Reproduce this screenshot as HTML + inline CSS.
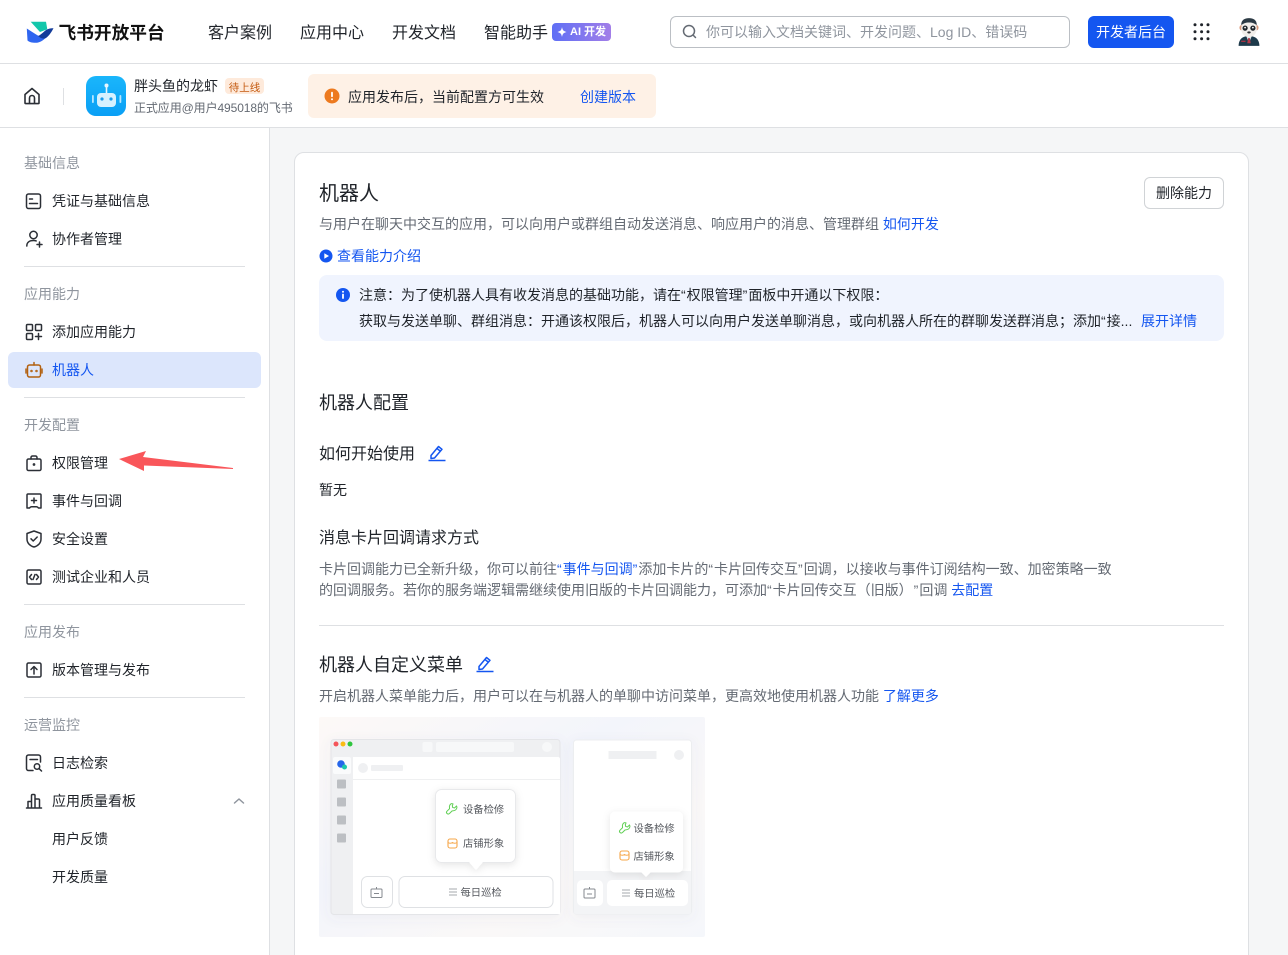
<!DOCTYPE html>
<html lang="zh"><head><meta charset="utf-8"><title>飞书开放平台</title>
<style>
html,body{margin:0;padding:0;width:1288px;height:955px;overflow:hidden;background:#f5f6f7;font-family:"Liberation Sans","Noto Sans CJK SC",sans-serif;color:#1f2329}
#r{position:relative;width:1288px;height:955px;overflow:hidden;background:#f5f6f7}
.a{position:absolute}
.t{position:absolute;white-space:nowrap;font-size:14px;line-height:22px;color:#1f2329;margin-top:1px}
.g{color:#646a73}.h{color:#8f959e}.b{color:#1456f0}
.q{letter-spacing:1px}
.n{font-size:16px;line-height:24px}
.l{position:absolute;background:#dee0e3;height:1px}
svg.i{position:absolute;fill:none;stroke:#2b2f36;stroke-width:1.5;stroke-linecap:round;stroke-linejoin:round}
</style></head><body><div id="r">

<div class="a" style="left:0;top:0;width:1288px;height:128px;background:#fff"></div>
<div class="l" style="left:0;top:63px;width:1288px"></div>
<div class="l" style="left:0;top:127px;width:1288px"></div>

<svg class="a" style="left:26px;top:20px" width="28" height="24" viewBox="0 0 28 24">
<path d="M4.700 1.700H20l1.300 7.600L14 12z" fill="#13c7ab"/>
<path d="M.8 8.500C5 11 9 14 13.500 16.500L20 17.500C17 20.500 14 22.800 9.500 22.800 6 22.800 3 22 1.500 20.500z" fill="#2f66f0"/>
<path d="M12 16C15 15 18 11 21 9.500 23 8.500 25 8 27.500 8.300 25.500 12 23.500 15.500 20 18 17 19.500 14.500 18 12 16z" fill="#133c9a"/>
</svg>
<div class="t" style="left:58.500px;top:20px;font-size:17.700px;line-height:24px;font-weight:700;color:#111">飞书开放平台</div>
<div class="t n" style="left:208px;top:21px">客户案例</div>
<div class="t n" style="left:300px;top:21px">应用中心</div>
<div class="t n" style="left:392px;top:21px">开发文档</div>
<div class="t n" style="left:484px;top:21px">智能助手</div>
<div class="a" style="left:552px;top:23px;width:59px;height:18px;border-radius:4px;background:linear-gradient(90deg,#5f6ff5,#a27ee8)"></div>
<svg class="a" style="left:556px;top:26px" width="12" height="12" viewBox="0 0 12 12"><path d="M6 1c.5 3 1.500 4.200 4.500 5C7.500 6.800 6.500 8 6 11 5.500 8 4.500 6.800 1.500 6 4.500 5.200 5.500 4 6 1z" fill="#fff"/></svg>
<div class="t" style="left:570px;top:22px;font-size:11px;line-height:18px;color:#fff;font-weight:700">AI 开发</div>

<div class="a" style="left:670px;top:16px;width:398px;height:30px;border:1px solid #bbbfc4;border-radius:6px;background:#fff"></div>
<svg class="i" style="left:681px;top:23px;stroke:#646a73" width="17" height="17" viewBox="0 0 17 17"><circle cx="8" cy="8" r="5.500"/><path d="M12 12l2.500 2.500"/></svg>
<div class="t h" style="left:706px;top:20px">你可以输入文档关键词、开发问题、Log ID、错误码</div>
<div class="a" style="left:1088px;top:16px;width:86px;height:32px;border-radius:6px;background:#1456f0"></div>
<div class="t" style="left:1088px;top:20px;width:86px;text-align:center;color:#fff">开发者后台</div>
<svg class="a" style="left:1193px;top:23px" width="18" height="18" viewBox="0 0 18 18" fill="#1f2329"><circle cx="2" cy="1.700" r="1.500"/><circle cx="8.600" cy="1.700" r="1.500"/><circle cx="15" cy="1.700" r="1.500"/><circle cx="2" cy="8.700" r="1.500"/><circle cx="8.600" cy="8.700" r="1.500"/><circle cx="15" cy="8.700" r="1.500"/><circle cx="2" cy="15.700" r="1.500"/><circle cx="8.600" cy="15.700" r="1.500"/><circle cx="15" cy="15.700" r="1.500"/></svg>
<svg class="a" style="left:1236px;top:17px" width="26" height="30" viewBox="0 0 30 34">
<path d="M3 33c0-6 3-10 8-11h8c5 1 8 5 8 11z" fill="#1d3a4a"/>
<path d="M12 22h6l-3 8z" fill="#dfe6ea"/><path d="M14 24h2l1 6h-4z" fill="#b33a48"/>
<rect x="6" y="27" width="5" height="1.500" fill="#a83344"/>
<ellipse cx="6" cy="12" rx="2" ry="3" fill="#d99a7c"/><ellipse cx="24" cy="12" rx="2" ry="3" fill="#d99a7c"/>
<ellipse cx="15" cy="13" rx="9" ry="10" fill="#f1eeea"/>
<path d="M6 9c0-6 4-8 9-8s9 2 9 8c-3-2-5-3-9-3s-6 1-9 3z" fill="#2c3a44"/>
<ellipse cx="10.500" cy="12.500" rx="3" ry="3" fill="#20262b"/><ellipse cx="19.500" cy="12.500" rx="3" ry="3" fill="#20262b"/>
<circle cx="10.500" cy="12" r="1" fill="#fff"/><circle cx="19.500" cy="12" r="1" fill="#fff"/>
<ellipse cx="15" cy="17.500" rx="2" ry="1.200" fill="#2b2f33"/>
</svg>

<svg class="i" style="left:23px;top:87px;stroke-width:1.600" width="18" height="18" viewBox="0 0 18 18"><path d="M2 7.500 9 1.500l7 6V16a.6.600 0 0 1-.6.600H2.600A.6.600 0 0 1 2 16zM6.500 16.500V11a2.500 2.500 0 0 1 5 0v5.500"/></svg>
<div class="a" style="left:63px;top:88px;width:1px;height:17px;background:#dee0e3"></div>
<svg class="a" style="left:86px;top:76px" width="40" height="40" viewBox="0 0 40 40">
<defs><linearGradient id="ag" x1="0" y1="0" x2="0" y2="1"><stop offset="0" stop-color="#1ab6fb"/><stop offset="1" stop-color="#0a9ff5"/></linearGradient></defs>
<rect width="40" height="40" rx="10" fill="url(#ag)"/>
<circle cx="20.500" cy="9.500" r="2" fill="#e6f7ff"/><rect x="19.700" y="10" width="1.600" height="7" fill="#e6f7ff"/>
<rect x="11" y="17" width="19" height="14" rx="4" fill="#d6f1ff"/>
<rect x="6" y="19" width="1.800" height="8" rx=".9" fill="#b6e6ff"/><rect x="33.500" y="19" width="1.800" height="8" rx=".9" fill="#b6e6ff"/>
<circle cx="16" cy="23" r="1.600" fill="#1a9cec"/><circle cx="25" cy="23" r="1.600" fill="#1a9cec"/>
</svg>
<div class="t" style="left:134px;top:74px">胖头鱼的龙虾</div>
<div class="a" style="left:225px;top:78px;width:39px;height:16px;border-radius:4px;background:#feeadb"></div>
<div class="t" style="left:225px;top:77px;width:39px;text-align:center;font-size:10.500px;line-height:20px;color:#c45a10">待上线</div>
<div class="t g" style="left:134px;top:96px;font-size:12px;letter-spacing:-.1px">正式应用@用户495018的飞书</div>
<div class="a" style="left:308px;top:74px;width:348px;height:44px;border-radius:6px;background:#fef1e6"></div>
<svg class="a" style="left:324px;top:88px" width="16" height="16" viewBox="0 0 16 16"><circle cx="8" cy="8" r="7.500" fill="#ed7a1f"/><rect x="7.100" y="3.800" width="1.800" height="5.400" rx=".9" fill="#fff"/><circle cx="8" cy="11.300" r="1" fill="#fff"/></svg>
<div class="t" style="left:348px;top:85px">应用发布后，当前配置方可生效</div>
<div class="t b" style="left:580px;top:85px">创建版本</div>

<div class="a" style="left:0;top:128px;width:269px;height:827px;background:#fff;border-right:1px solid #dee0e3"></div>
<div class="t h" style="left:24px;top:151px">基础信息</div>
<div class="t" style="left:52px;top:189px">凭证与基础信息</div>
<svg class="i" style="left:25px;top:193px" width="17" height="17" viewBox="0 0 17 17"><rect x="1.500" y="1" width="14" height="14.500" rx="2"/><path d="M4.500 6h3M4.500 10.500h8"/></svg>
<div class="t" style="left:52px;top:227px">协作者管理</div>
<svg class="i" style="left:25px;top:230px" width="18" height="18" viewBox="0 0 18 18"><circle cx="8.500" cy="5" r="3.700"/><path d="M1.800 16c0-3.500 2.500-5.500 6.700-5.500 1 0 2 .1 2.700.4M12 14.500h5M14.500 12v5"/></svg>
<div class="l" style="left:24px;top:266px;width:221px"></div>
<div class="t h" style="left:24px;top:282px">应用能力</div>
<div class="t" style="left:52px;top:320px">添加应用能力</div>
<svg class="i" style="left:25px;top:323px" width="18" height="18" viewBox="0 0 18 18"><rect x="1.500" y="1.500" width="6" height="6" rx="1"/><rect x="10.500" y="1.500" width="6" height="6" rx="1"/><rect x="1.500" y="10.500" width="6" height="6" rx="1"/><path d="M10.500 13.500h6M13.500 10.500v6"/></svg>
<div class="a" style="left:8px;top:352px;width:253px;height:36px;border-radius:6px;background:#dce6fc"></div>
<svg class="i" style="left:25px;top:361px;stroke:#b2600f" width="18" height="18" viewBox="0 0 18 18"><rect x="2.500" y="4" width="13" height="12" rx="2"/><path d="M9 1.500V4M1 8v4M17 8v4"/><circle cx="6.500" cy="10" r=".5"/><circle cx="11.500" cy="10" r=".5"/></svg>
<div class="t b" style="left:52px;top:358px">机器人</div>
<div class="l" style="left:24px;top:397px;width:221px"></div>
<div class="t h" style="left:24px;top:413px">开发配置</div>
<div class="t" style="left:52px;top:451px">权限管理</div>
<svg class="i" style="left:25px;top:454px" width="18" height="18" viewBox="0 0 18 18"><rect x="2" y="5" width="14" height="11.500" rx="1.500"/><path d="M6 5V3.500a1.500 1.500 0 0 1 1.500-1.500h3A1.500 1.500 0 0 1 12 3.500V5"/><circle cx="9" cy="10.500" r=".6"/></svg>
<div class="t" style="left:52px;top:489px">事件与回调</div>
<svg class="i" style="left:25px;top:492px" width="18" height="18" viewBox="0 0 18 18"><path d="M3 2h12a1 1 0 0 1 1 1v13h-2.500q-1-1.200-2-1.200h-5q-1 0-2 1.200H2V3a1 1 0 0 1 1-1zM9 6v5M6.500 8.500h5"/></svg>
<div class="t" style="left:52px;top:527px">安全设置</div>
<svg class="i" style="left:25px;top:530px" width="18" height="18" viewBox="0 0 18 18"><path d="M9 1 16 3.500V9c0 4-3 7-7 8-4-1-7-4-7-8V3.500zM6 8.800l2.200 2.200 4-4"/></svg>
<div class="t" style="left:52px;top:565px">测试企业和人员</div>
<svg class="i" style="left:25px;top:568px" width="18" height="18" viewBox="0 0 18 18"><rect x="2" y="2" width="14" height="14" rx="1.500"/><path d="M6.500 6.500 4.500 9l2 2.500M11.500 6.500l2 2.500-2 2.500M10 6.500 8 11.500"/></svg>
<div class="l" style="left:24px;top:604px;width:221px"></div>
<div class="t h" style="left:24px;top:620px">应用发布</div>
<div class="t" style="left:52px;top:658px">版本管理与发布</div>
<svg class="i" style="left:25px;top:661px" width="18" height="18" viewBox="0 0 18 18"><rect x="2" y="2" width="14" height="14" rx="1.500"/><path d="M9 13V6M6 8.500 9 5.500l3 3"/></svg>
<div class="l" style="left:24px;top:697px;width:221px"></div>
<div class="t h" style="left:24px;top:713px">运营监控</div>
<div class="t" style="left:52px;top:751px">日志检索</div>
<svg class="i" style="left:25px;top:754px" width="18" height="18" viewBox="0 0 18 18"><path d="M8 16.500H3.500a2 2 0 0 1-2-2V3a2 2 0 0 1 2-2h10a2 2 0 0 1 2 2v5M5 5.500h7.500"/><circle cx="12" cy="12.500" r="2.700"/><path d="M14 14.500l2.500 2.500"/></svg>
<div class="t" style="left:52px;top:789px">应用质量看板</div>
<svg class="i" style="left:25px;top:792px" width="18" height="18" viewBox="0 0 18 18"><path d="M1.500 16h15M3 16V9.500h3.500V16M6.500 16V3.500a1 1 0 0 1 1-1h1.500a1 1 0 0 1 1 1V16M10 16V7h3.500a1 1 0 0 1 1 1v8"/></svg>
<svg class="i" style="left:233px;top:796px;stroke:#8f959e" width="12" height="10" viewBox="0 0 12 10"><path d="M1.500 7 6 3l4.500 4"/></svg>
<div class="t" style="left:52px;top:827px">用户反馈</div>
<div class="t" style="left:52px;top:865px">开发质量</div>

<svg class="a" style="left:117px;top:449px" width="120" height="24" viewBox="0 0 120 24"><path d="M2 10 29 2l-3 6 90 11v1L27 16.500 27 22z" fill="#f9565a"/></svg>

<div class="a" style="left:294px;top:152px;width:953px;height:830px;background:#fff;border:1px solid #dee0e3;border-radius:10px"></div>
<div class="t" style="left:319px;top:179px;font-size:20px;line-height:28px">机器人</div>
<div class="a" style="left:1144px;top:177px;width:78px;height:30px;border:1px solid #d0d3d6;border-radius:6px;background:#fff"></div>
<div class="t" style="left:1144px;top:181px;width:80px;text-align:center">删除能力</div>
<div class="t g" style="left:319px;top:212px">与用户在聊天中交互的应用，可以向用户或群组自动发送消息、响应用户的消息、管理群组 <span class="b">如何开发</span></div>
<svg class="a" style="left:319px;top:249px" width="14" height="14" viewBox="0 0 14 14"><circle cx="7" cy="7" r="6.500" fill="#1456f0"/><path d="M5.300 4.200v5.600L10 7z" fill="#fff"/></svg>
<div class="t b" style="left:337px;top:244px">查看能力介绍</div>
<div class="a" style="left:319px;top:275px;width:905px;height:66px;border-radius:8px;background:#f0f4fe"></div>
<svg class="a" style="left:336px;top:288px" width="14" height="14" viewBox="0 0 14 14"><circle cx="7" cy="7" r="7" fill="#1456f0"/><circle cx="7" cy="3.800" r="1" fill="#fff"/><rect x="6.100" y="5.800" width="1.800" height="5" rx=".6" fill="#fff"/></svg>
<div class="t" style="left:359px;top:283px">注意：为了使机器人具有收发消息的基础功能，请在<span class="q">“</span>权限管理<span class="q">”</span>面板中开通以下权限：</div>
<div class="t" style="left:359px;top:309px">获取与发送单聊、群组消息：开通该权限后，机器人可以向用户发送单聊消息，或向机器人所在的群聊发送群消息；添加<span class="q">“</span>接...</div>
<div class="t b" style="left:1141px;top:309px">展开详情</div>

<div class="t" style="left:319px;top:389px;font-size:18px;line-height:26px">机器人配置</div>
<div class="t n" style="left:319px;top:442px">如何开始使用</div>
<svg class="a" style="left:428px;top:444px" width="18" height="18" viewBox="0 0 18 18" fill="none" stroke="#1456f0" stroke-width="1.500" stroke-linejoin="round"><path d="M3 11.500 10.500 2.500l3.500 2.800-7.500 8.700-3.500 .5zM9 4.500l3.500 2.800"/><path d="M.5 16.500h17"/></svg>
<div class="t" style="left:319px;top:478px">暂无</div>
<div class="t n" style="left:319px;top:526px">消息卡片回调请求方式</div>
<div class="t g" style="left:319px;top:557px">卡片回调能力已全新升级，你可以前往<span class="b"><span class="q">“</span>事件与回调<span class="q">”</span></span>添加卡片的<span class="q">“</span>卡片回传交互<span class="q">”</span>回调，以接收与事件订阅结构一致、加密策略一致</div>
<div class="t g" style="left:319px;top:578px">的回调服务。若你的服务端逻辑需继续使用旧版的卡片回调能力，可添加<span class="q">“</span>卡片回传交互（旧版）<span class="q" style="margin-left:8px">”</span>回调 <span class="b">去配置</span></div>
<div class="l" style="left:319px;top:625px;width:905px"></div>
<div class="t" style="left:319px;top:651px;font-size:18px;line-height:26px">机器人自定义菜单</div>
<svg class="a" style="left:476px;top:655px" width="18" height="18" viewBox="0 0 18 18" fill="none" stroke="#1456f0" stroke-width="1.500" stroke-linejoin="round"><path d="M3 11.500 10.500 2.500l3.500 2.800-7.500 8.700-3.500 .5zM9 4.500l3.500 2.800"/><path d="M.5 16.500h17"/></svg>
<div class="t g" style="left:319px;top:684px">开启机器人菜单能力后，用户可以在与机器人的单聊中访问菜单，更高效地使用机器人功能 <span class="b">了解更多</span></div>

<svg class="a" style="left:319px;top:717px;filter:blur(.35px)" width="386" height="220" viewBox="0 0 386 220" font-family="'Liberation Sans','Noto Sans CJK SC',sans-serif">
<defs>
<linearGradient id="bg1" x1="0" y1="0" x2="1" y2="1"><stop offset="0" stop-color="#fdf9f7"/><stop offset=".4" stop-color="#f3f5fb"/><stop offset=".7" stop-color="#faf8f8"/><stop offset="1" stop-color="#f5f7fb"/></linearGradient>
<filter id="s" x="-30%" y="-30%" width="160%" height="160%"><feDropShadow dx="0" dy="2" stdDeviation="4" flood-color="#000" flood-opacity=".1"/></filter>
<filter id="w" x="-10%" y="-10%" width="120%" height="120%"><feDropShadow dx="0" dy="3" stdDeviation="6" flood-color="#667" flood-opacity=".06"/></filter>
</defs>
<rect width="386" height="220" rx="2" fill="url(#bg1)"/>
<g filter="url(#w)"><rect x="12" y="22.500" width="229" height="175" rx="3" fill="#eff0f2" stroke="#e4e5e8"/></g>
<circle cx="17" cy="27" r="2.500" fill="#f4555a"/><circle cx="24" cy="27" r="2.500" fill="#fabc14"/><circle cx="31" cy="27" r="2.500" fill="#2fc53e"/>
<rect x="103.500" y="25" width="10" height="10" rx="2" fill="#f7f8f9"/><rect x="117" y="25" width="78" height="10" rx="2" fill="#f7f8f9"/><circle cx="228" cy="30" r="5" fill="#f7f8f9"/>
<rect x="14" y="40" width="18" height="17" rx="2" fill="#fafbfc"/><circle cx="22" cy="47" r="3.800" fill="#2566ea"/><circle cx="25.500" cy="50" r="2.500" fill="#1cc8ab"/>
<rect x="18" y="62.500" width="9" height="9" rx="1" fill="#bcbfc3"/><rect x="18" y="80.500" width="9" height="9" rx="1" fill="#bcbfc3"/><rect x="18" y="98.500" width="9" height="9" rx="1" fill="#bcbfc3"/><rect x="18" y="116.500" width="9" height="9" rx="1" fill="#bcbfc3"/>
<path d="M34 40h205a2 2 0 0 1 2 2v155H34z" fill="#fff"/>
<rect x="34" y="62" width="207" height="1" fill="#eff0f1"/>
<circle cx="44" cy="51" r="5" fill="#eff0f2"/><rect x="52" y="48" width="32" height="6" rx="1" fill="#eff0f2"/>
<g filter="url(#s)"><rect x="116.500" y="72.500" width="80" height="73" rx="6" fill="#fff" stroke="#e8e9eb"/><path d="M150 145h14l-7 8z" fill="#fff"/></g>
<path d="M134 87c-2-1-3 .5-3.500 2-.3 1 .2 2 0 2.700l-2.500 2.500c-1 1-.5 1.800 0 2.300s1.300 1 2.500 0l2.500-2.500c1.500-.2 3-.2 4-1.500s1-2.800.5-3.500l-2 2-1.800-.5-.4-1.800z" fill="none" stroke="#61cf55" stroke-width="1"/>
<text x="144" y="96" font-size="10.300" fill="#55585e">设备检修</text>
<rect x="129" y="122" width="9" height="9" rx="2" fill="none" stroke="#f6a74a" stroke-width="1.100"/><path d="M129 125.500q2.200 1.500 4.500 0 2.300 1.500 4.500 0" fill="none" stroke="#f6a74a" stroke-width="1"/>
<text x="144" y="130" font-size="10.300" fill="#55585e">店铺形象</text>
<rect x="42.500" y="159.500" width="31" height="31" rx="6" fill="#fff" stroke="#dfe1e4"/>
<rect x="52" y="172" width="11" height="8.500" rx="1" fill="none" stroke="#85898f" stroke-width="1"/><path d="M57.500 170v2M55 176.500h5" stroke="#85898f" stroke-width="1"/>
<rect x="80" y="159.500" width="154" height="31" rx="6" fill="#fff" stroke="#dfe1e4"/>
<path d="M130 172h8M130 175h8M130 178h8" stroke="#a5a8ad" stroke-width="1"/>
<text x="141.500" y="179" font-size="10.300" fill="#55585e">每日巡检</text>

<g filter="url(#w)"><rect x="254.500" y="23" width="118" height="174" rx="3" fill="#fff" stroke="#eceef0"/></g>
<path d="M255 154h117v41a2 2 0 0 1-2 2H257a2 2 0 0 1-2-2z" fill="#f3f4f6"/>
<rect x="289.500" y="34" width="48" height="8" fill="#eff0f2"/><circle cx="360" cy="38" r="5" fill="#eff0f2"/>
<g filter="url(#s)"><rect x="291" y="94.500" width="73" height="61" rx="5" fill="#fff"/><path d="M322 155h10l-5 5z" fill="#fff"/></g>
<path d="M307 106c-2-1-3 .5-3.500 2-.3 1 .2 2 0 2.700l-2.500 2.500c-1 1-.5 1.800 0 2.300s1.300 1 2.500 0l2.500-2.500c1.500-.2 3-.2 4-1.500s1-2.800.5-3.500l-2 2-1.800-.5-.4-1.800z" fill="none" stroke="#61cf55" stroke-width="1"/>
<text x="314.500" y="115" font-size="10.300" fill="#55585e">设备检修</text>
<rect x="301" y="134" width="9" height="9" rx="2" fill="none" stroke="#f6a74a" stroke-width="1.100"/><path d="M301 137.500q2.200 1.500 4.500 0 2.300 1.500 4.500 0" fill="none" stroke="#f6a74a" stroke-width="1"/>
<text x="314.500" y="143" font-size="10.300" fill="#55585e">店铺形象</text>
<rect x="258" y="163" width="26" height="26" rx="5" fill="#fff"/>
<rect x="265" y="172" width="11" height="9" rx="1" fill="none" stroke="#85898f" stroke-width="1"/><path d="M270.500 170v2M268 177h5" stroke="#85898f" stroke-width="1"/>
<rect x="288" y="163" width="81" height="26" rx="5" fill="#fff"/>
<path d="M303 173h8M303 176h8M303 179h8" stroke="#a5a8ad" stroke-width="1"/>
<text x="315" y="180" font-size="10.300" fill="#55585e">每日巡检</text>
</svg>
</div></body></html>
